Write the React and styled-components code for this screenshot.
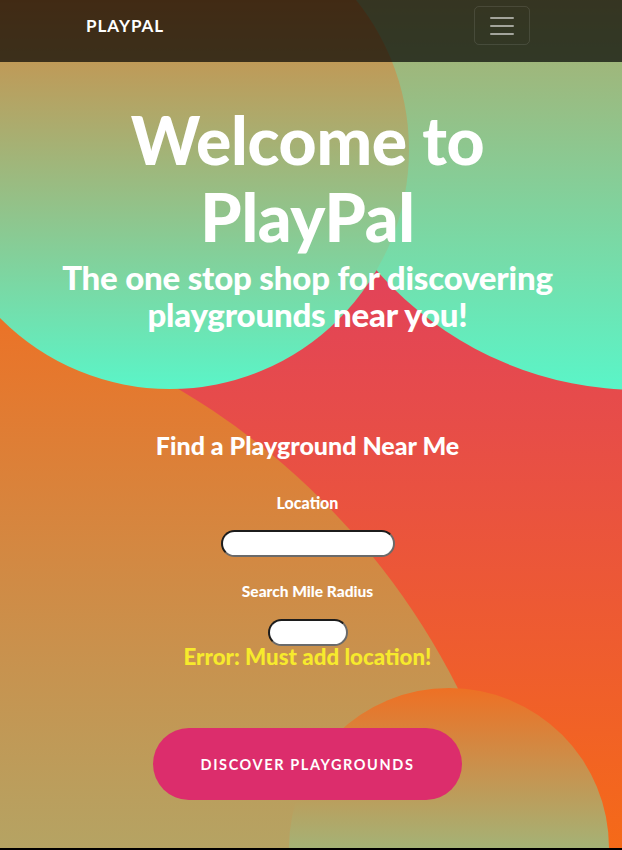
import React from "react";
import styled, { createGlobalStyle } from "styled-components";

const GlobalStyle = createGlobalStyle`
  html, body {
    margin: 0;
    padding: 0;
    background: #000;
  }
  body {
    font-family: Lato, "Noto Sans", sans-serif;
  }
  * { box-sizing: border-box; }
`;

const Page = styled.div`
  position: relative;
  height: 848px;
  overflow: hidden;
  background: linear-gradient(180deg, #d93078 0px, #f56a18 850px);
`;

const Backdrop = styled.svg`
  position: absolute;
  inset: 0;
  width: 100%;
  height: 100%;
  z-index: 0;
`;

const Layer = styled.div`
  position: relative;
  z-index: 1;
  display: flex;
  flex-direction: column;
`;

const NavBar = styled.nav`
  height: 62px;
  background: rgba(0, 0, 0, 0.69);
  display: flex;
  align-items: flex-start;
  justify-content: space-between;
  padding: 6px 92px 0 86px;
`;

const Brand = styled.a`
  color: #fff;
  font-family: Lato, sans-serif;
  font-weight: 700;
  font-size: 17px;
  letter-spacing: 1px;
  line-height: 39px;
  text-decoration: none;
`;

const Toggler = styled.button`
  width: 56px;
  height: 39px;
  border: 1px solid rgba(255, 255, 255, 0.1);
  border-radius: 5px;
  background: transparent;
  display: flex;
  align-items: center;
  justify-content: center;
  padding: 0;
`;

const Hero = styled.main`
  display: flex;
  flex-direction: column;
  align-items: center;
  text-align: center;
  color: #fff;
  padding-right: 7px;
`;

const Title = styled.h1`
  margin: 39px 0 0;
  font-size: 66px;
  line-height: 77px;
  font-weight: 900;
  letter-spacing: -0.3px;
`;

const Subtitle = styled.h2`
  margin: 4px 0 0;
  font-size: 33px;
  line-height: 37px;
  font-weight: 900;
  letter-spacing: -0.2px;
  max-width: 560px;
`;

const SectionTitle = styled.h3`
  margin: 98px 0 0;
  font-size: 25px;
  line-height: 29px;
  font-weight: 900;
`;

const Label = styled.label`
  display: block;
  margin-top: ${(p) => p.$gap}px;
  font-size: ${(p) => p.$size}px;
  line-height: 18px;
  font-weight: 900;
`;

const Field = styled.input`
  margin-top: ${(p) => p.$gap}px;
  width: ${(p) => p.$w}px;
  height: 27px;
  border-radius: 14px;
  border-style: solid;
  border-width: 2px;
  border-color: #1c1c1c #6a6a6a #6a6a6a #1c1c1c;
  background: #fff;
  outline: none;
  padding: 0 10px;
`;

const ErrorText = styled.p`
  margin: 0;
  color: #f7ea2c;
  font-size: 22.3px;
  line-height: 22px;
  font-weight: 900;
`;

const Discover = styled.button`
  margin-top: 60px;
  width: 309px;
  height: 72px;
  border: none;
  border-radius: 36px;
  background: #dc2d6c;
  color: #fff;
  font-family: Lato, sans-serif;
  font-weight: 700;
  font-size: 14.5px;
  letter-spacing: 1.6px;
  text-transform: uppercase;
`;

function Blobs() {
  return (
    <Backdrop viewBox="0 0 622 848" preserveAspectRatio="none" aria-hidden="true">
      <defs>
        <linearGradient id="warmCool" x1="0" y1="0" x2="0" y2="1">
          <stop offset="0" stopColor="#ee7024" />
          <stop offset="1" stopColor="#5af5c8" />
        </linearGradient>
      </defs>
      <circle cx="-191" cy="1014" r="726" fill="url(#warmCool)" />
      <circle cx="640" cy="40" r="350" fill="url(#warmCool)" />
      <circle cx="170" cy="150" r="239" fill="url(#warmCool)" />
      <circle cx="449" cy="848" r="160" fill="url(#warmCool)" />
    </Backdrop>
  );
}

export default function App() {
  return (
    <>
      <GlobalStyle />
      <Page>
        <Blobs />
        <Layer>
          <NavBar>
            <Brand href="#">PLAYPAL</Brand>
            <Toggler aria-label="Toggle navigation">
              <svg width="30" height="30" viewBox="0 0 30 30">
                <path
                  d="M4 7h22M4 15h22M4 23h22"
                  stroke="rgba(255,255,255,0.55)"
                  strokeWidth="2"
                  strokeLinecap="round"
                />
              </svg>
            </Toggler>
          </NavBar>
          <Hero>
            <Title>
              Welcome to
              <br />
              PlayPal
            </Title>
            <Subtitle>The one stop shop for discovering playgrounds near you!</Subtitle>
            <SectionTitle>Find a Playground Near Me</SectionTitle>
            <Label $gap={34} $size={16} htmlFor="loc">Location</Label>
            <Field id="loc" $gap={18} $w={174} />
            <Label $gap={25} $size={15.5} htmlFor="rad">Search Mile Radius</Label>
            <Field id="rad" $gap={19} $w={80} />
            <ErrorText>Error: Must add location!</ErrorText>
            <Discover>Discover Playgrounds</Discover>
          </Hero>
        </Layer>
      </Page>
    </>
  );
}
